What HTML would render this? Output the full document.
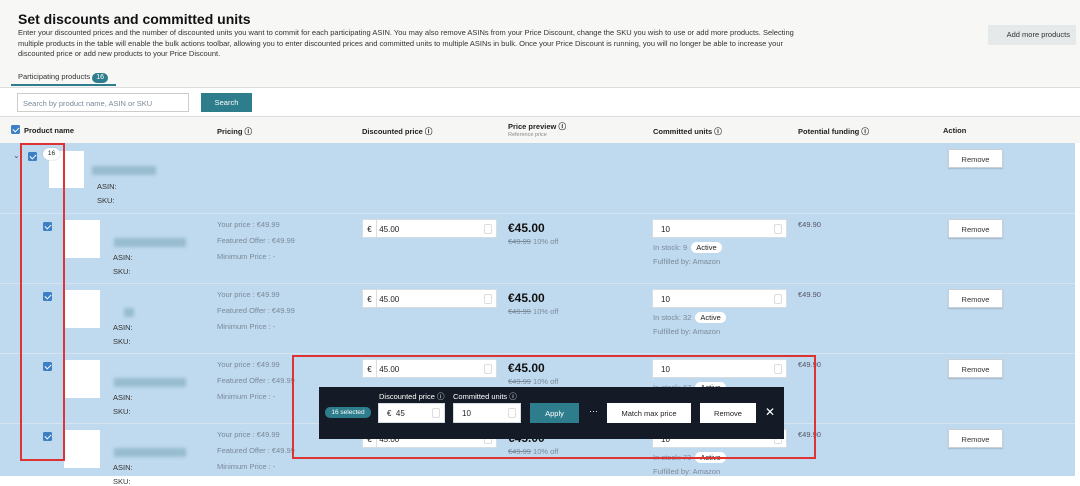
<!DOCTYPE html><html><head><meta charset="utf-8"><style>
*{box-sizing:border-box;margin:0;padding:0}
body{width:1080px;height:483px;position:relative;overflow:hidden;background:#fff;font-family:"Liberation Sans",sans-serif;color:#222}
.a{position:absolute;white-space:nowrap}
.t{font-size:7.5px;color:#444}
.g{font-size:7.5px;color:#7a8a99}
.cb{position:absolute;width:9px;height:9px;background:#3d7fc4;border-radius:1.5px}
.cb:after{content:"";position:absolute;left:2.5px;top:1px;width:3px;height:5px;border:solid #fff;border-width:0 1.3px 1.3px 0;transform:rotate(45deg)}
.in{position:absolute;background:#fff;border:1px solid #d5dce2;font-size:8px;color:#222;padding:5px 0 0 8px;white-space:nowrap}
.sp{position:absolute;right:4px;top:4px;width:8px;height:10px;border:1px solid #ddd;border-radius:2px}
.btn{position:absolute;background:#fff;border:1px solid #c9d0d6;font-size:7.5px;text-align:center;color:#333;box-shadow:0 1px 1px rgba(0,0,0,.15)}
.h{font-size:7.5px;font-weight:bold;color:#222}
.pill{display:inline-block;background:#fff;border-radius:7px;padding:1px 5px;color:#222;margin-left:4px}
.blur{position:absolute;background:#8fb5c8;filter:blur(1.5px);opacity:.8}
</style></head><body>
<div class="a" style="left:0;top:0;width:1080px;height:87px;background:#f7f7f6"></div>
<div class="a" style="left:0;top:87px;width:1080px;height:1px;background:#dcdcdc"></div>
<div class="a" style="left:18px;top:11px;font-size:14px;font-weight:bold;color:#111">Set discounts and committed units</div>
<div class="a t" style="left:18px;top:28px;line-height:10.5px;color:#333">Enter your discounted prices and the number of discounted units you want to commit for each participating ASIN. You may also remove ASINs from your Price Discount, change the SKU you wish to use or add more products. Selecting<br>multiple products in the table will enable the bulk actions toolbar, allowing you to enter discounted prices and committed units to multiple ASINs in bulk. Once your Price Discount is running, you will no longer be able to increase your<br>discounted price or add new products to your Price Discount.</div>
<div class="a" style="left:988px;top:25px;width:88px;height:20px;background:#e6e9e9;font-size:7.5px;text-align:right;padding:5px 6px 0 0;color:#333">Add more products</div>
<div class="a t" style="left:18px;top:72px;color:#333">Participating products <span style="display:inline-block;background:#2e7d8c;color:#fff;border-radius:6px;padding:1px 4px;font-size:7px;line-height:8px">16</span></div>
<div class="a" style="left:11px;top:84px;width:105px;height:2px;background:#2e7d8c"></div>
<div class="a g" style="left:17px;top:93px;width:172px;height:19px;background:#fff;border:1px solid #ccc;padding:5px 0 0 5px">Search by product name, ASIN or SKU</div>
<div class="a" style="left:201px;top:93px;width:51px;height:19px;background:#2e7d8c;color:#fff;font-size:7.5px;text-align:center;padding-top:5px">Search</div>
<div class="a" style="left:0;top:116px;width:1080px;height:27px;background:#f6f6f5;border-top:1px solid #ddd"></div>
<div class="cb" style="left:11px;top:125px"></div>
<div class="a h" style="left:24px;top:126px">Product name</div>
<div class="a h" style="left:217px;top:126px">Pricing ⓘ</div>
<div class="a h" style="left:362px;top:126px">Discounted price ⓘ</div>
<div class="a h" style="left:508px;top:121px">Price preview ⓘ</div>
<div class="a" style="left:508px;top:132px;font-size:5.5px;color:#888">Reference price</div>
<div class="a h" style="left:653px;top:126px">Committed units ⓘ</div>
<div class="a h" style="left:798px;top:126px">Potential funding ⓘ</div>
<div class="a h" style="left:943px;top:126px">Action</div>
<div class="a" style="left:0;top:143px;width:1075px;height:333px;background:#bfd9ee"></div>
<div class="a" style="left:13px;top:151px;font-size:8px;color:#555">⌄</div>
<div class="cb" style="left:28px;top:152px"></div>
<div class="a" style="left:49px;top:151px;width:35px;height:37px;background:#fff"></div>
<div class="a" style="left:43px;top:148px;width:17px;height:12px;background:#fff;border-radius:6px;font-size:6.5px;line-height:12px;text-align:center;box-shadow:0 0 1px #999">16</div>
<div class="blur" style="left:92px;top:166px;width:64px;height:9px"></div>
<div class="a t" style="left:97px;top:182px;color:#333">ASIN:</div>
<div class="a t" style="left:97px;top:196px;color:#333">SKU:</div>
<div class="btn" style="left:948px;top:149px;width:55px;height:19px;padding-top:5px">Remove</div>
<div id="rows"></div>
<script>
var stock=[9,32,67,73],h='';
for(var k=0;k<4;k++){var y=213+70*k;
h+='<div class="a" style="left:0;top:'+y+'px;width:1075px;height:1px;background:#d3e5f3"></div>'+
'<div class="cb" style="left:43px;top:'+(y+9)+'px"></div>'+
'<div class="a" style="left:64px;top:'+(y+7)+'px;width:36px;height:38px;background:#fff"></div>'+
'<div class="blur" style="left:'+(k==1?124:114)+'px;top:'+(y+25)+'px;width:'+(k==1?10:72)+'px;height:9px"></div>'+
'<div class="a t" style="left:113px;top:'+(y+40)+'px;color:#333">ASIN:</div>'+
'<div class="a t" style="left:113px;top:'+(y+54)+'px;color:#333">SKU:</div>'+
'<div class="a g" style="left:217px;top:'+(y+7)+'px">Your price : €49.99</div>'+
'<div class="a g" style="left:217px;top:'+(y+23)+'px">Featured Offer : €49.99</div>'+
'<div class="a g" style="left:217px;top:'+(y+39)+'px">Minimum Price : -</div>'+
'<div class="in" style="left:362px;top:'+(y+6)+'px;width:135px;height:19px;padding-left:0"><span style="display:inline-block;width:14px;text-align:center;border-right:1px solid #ddd;height:17px;margin-top:-5px;padding-top:5px">€</span> 45.00<div class="sp"></div></div>'+
'<div class="a" style="left:508px;top:'+(y+8)+'px;font-size:12px;font-weight:bold;color:#111">€45.00</div>'+
'<div class="a g" style="left:508px;top:'+(y+24)+'px"><s>€49.99</s> 10% off</div>'+
'<div class="in" style="left:652px;top:'+(y+6)+'px;width:135px;height:19px">10<div class="sp"></div></div>'+
'<div class="a g" style="left:653px;top:'+(y+29)+'px">In stock: '+stock[k]+'<span class="pill">Active</span></div>'+
'<div class="a g" style="left:653px;top:'+(y+44)+'px">Fulfilled by: Amazon</div>'+
'<div class="a g" style="left:798px;top:'+(y+7)+'px;color:#556">€49.90</div>'+
'<div class="btn" style="left:948px;top:'+(y+6)+'px;width:55px;height:19px;padding-top:5px">Remove</div>';}
document.getElementById('rows').innerHTML=h;
</script>
<div class="a" style="left:20px;top:143px;width:45px;height:318px;border:2px solid #d33"></div>
<div class="a" style="left:292px;top:355px;width:524px;height:104px;border:2px solid #d33"></div>
<div class="a" style="left:319px;top:387px;width:465px;height:52px;background:#141b26"></div>
<div class="a" style="left:325px;top:407px;width:46px;height:11px;background:#2e7d8c;border-radius:5px;color:#fff;font-size:6.5px;text-align:center;padding-top:2px">16 selected</div>
<div class="a" style="left:379px;top:391px;font-size:7.5px;color:#fff">Discounted price ⓘ</div>
<div class="a" style="left:453px;top:391px;font-size:7.5px;color:#fff">Committed units ⓘ</div>
<div class="in" style="left:378px;top:403px;width:67px;height:20px">€ &nbsp;45<div class="sp"></div></div>
<div class="in" style="left:453px;top:403px;width:68px;height:20px">10<div class="sp"></div></div>
<div class="a" style="left:530px;top:403px;width:49px;height:20px;background:#2e7d8c;color:#fff;font-size:7.5px;text-align:center;padding-top:6px">Apply</div>
<div class="a" style="left:589px;top:406px;color:#fff;font-size:9px">···</div>
<div class="a" style="left:607px;top:403px;width:84px;height:20px;background:#fff;font-size:7.5px;text-align:center;padding-top:6px">Match max price</div>
<div class="a" style="left:700px;top:403px;width:56px;height:20px;background:#fff;font-size:7.5px;text-align:center;padding-top:6px">Remove</div>
<div class="a" style="left:765px;top:405px;color:#fff;font-size:12px">✕</div>
</body></html>
